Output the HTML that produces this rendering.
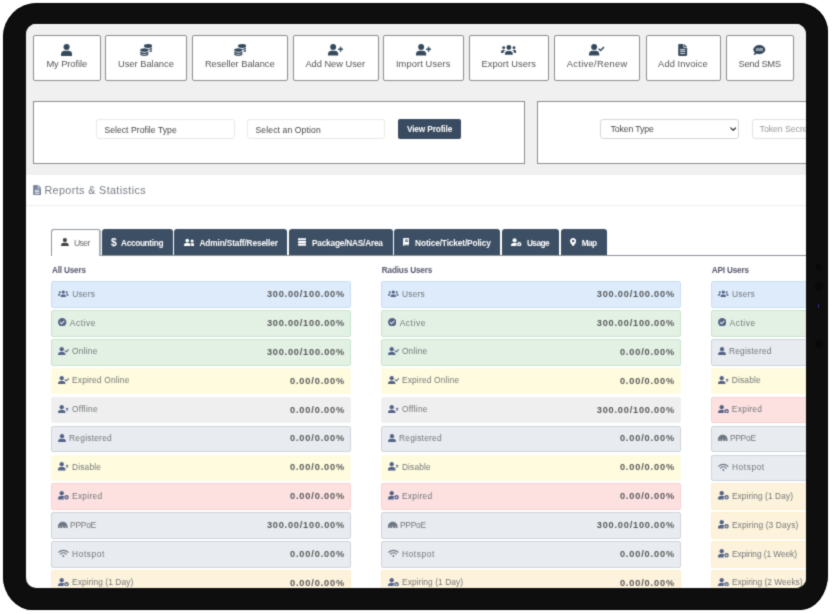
<!DOCTYPE html>
<html lang="en"><head><meta charset="utf-8"><title>Dashboard</title>
<style>
html,body{margin:0;padding:0;background:#fff}
body{width:833px;height:614px;position:relative;overflow:hidden;font-family:"Liberation Sans",sans-serif}
#wrap{position:absolute;left:0;top:0;width:833px;height:614px;background:#fff;filter:url(#soft)}
#frame{position:absolute;left:3px;top:3px;width:825px;height:606.6px;background:#0e0e0e;border-radius:34px 29px 28px 30px / 34px 29px 36px 34px;box-shadow:inset 0 0 0 1px #000}
#screen{position:absolute;left:26px;top:24px;width:780px;height:564px;border-radius:10px;overflow:hidden;background:#fff}
#page{position:absolute;left:-26px;top:-24px;width:833px;height:614px}
#page>div,#page>span,#page>i{position:absolute;box-sizing:border-box}
#page>span{line-height:14px;white-space:nowrap}
#grey{left:0;top:0;width:833px;height:174.6px;background:#f0f0f0}
</style></head>
<body>
<svg width="0" height="0" style="position:absolute"><filter id="soft" x="0" y="0" width="100%" height="100%" color-interpolation-filters="sRGB"><feConvolveMatrix order="3" kernelMatrix="0.03 0.1 0.03 0.1 0.48 0.1 0.03 0.1 0.03" edgeMode="duplicate"/></filter></svg>
<div id="wrap">
<div id="frame"></div>
<div id="cam1" style="position:absolute;left:815.5px;top:264px;width:6px;height:6px;border-radius:50%;background:#090909"></div>
<div id="cam2" style="position:absolute;left:815px;top:283px;width:8px;height:8px;border-radius:50%;background:#090909"></div>
<div id="cam3" style="position:absolute;left:815px;top:340px;width:8px;height:8px;border-radius:50%;background:#090909"></div>
<div id="led" style="position:absolute;left:817.500px;top:303.500px;width:1.500px;height:4px;background:#2a2f8f"></div>
<div id="screen"><div id="page">
<div id="grey"></div>
<div style="left:0;top:24px;width:833px;height:1px;background:#fafafa"></div>
<div style="left:33.1px;top:35.3px;width:67.8px;height:46.0px;background:#fff;border:1px solid #8d8d8d;border-radius:2px"></div>
<i style="left:61.1px;top:44.0px;width:11.2px;height:11.9px"><svg viewBox="0 0 15 16" width="11.2" height="11.9" fill="#34495e" style="display:block"><circle cx="7.500" cy="4.100" r="4.100"/><path d="M0 16v-2.200C0 11.100 2.100 9.200 4.700 9.200h5.600c2.600 0 4.700 1.900 4.700 4.600V16z"/></svg></i>
<span style="letter-spacing:-0.059px;left:46.4px;top:56.6px;font-size:9.3px;color:#555;font-weight:400;">My Profile</span>
<div style="left:105.4px;top:35.3px;width:81.7px;height:46.0px;background:#fff;border:1px solid #8d8d8d;border-radius:2px"></div>
<i style="left:139.7px;top:44.0px;width:12.4px;height:12.0px"><svg viewBox="0 0 16 16" width="12.4" height="12.0" fill="#34495e" style="display:block"><ellipse cx="10.500" cy="2.600" rx="5.500" ry="2.600"/><path d="M16 4.300v1.700c0 .9-1.600 1.700-3.900 2-.3-.6-1-1.100-1.900-1.500 2.700-.1 5-.9 5.800-2.200z"/><path d="M16 7.500v1.700c0 .8-1.300 1.500-3.300 1.900V8.900c1.500-.3 2.700-.8 3.300-1.400z"/><ellipse cx="5.500" cy="8" rx="5.500" ry="2.400"/><path d="M0 9.700c1 1.200 3.100 1.800 5.500 1.800s4.500-.6 5.500-1.800v1.500c0 1.200-2.500 2.200-5.500 2.200S0 12.400 0 11.200z"/><path d="M0 12.400c1 1.200 3.100 1.800 5.500 1.800s4.500-.6 5.500-1.800v1.400c0 1.200-2.500 2.200-5.500 2.200S0 15 0 13.800z"/></svg></i>
<span style="letter-spacing:-0.001px;left:118.0px;top:56.6px;font-size:9.3px;color:#555;font-weight:400;">User Balance</span>
<div style="left:191.9px;top:35.3px;width:96.4px;height:46.0px;background:#fff;border:1px solid #8d8d8d;border-radius:2px"></div>
<i style="left:233.6px;top:44.0px;width:12.4px;height:12.0px"><svg viewBox="0 0 16 16" width="12.4" height="12.0" fill="#34495e" style="display:block"><ellipse cx="10.500" cy="2.600" rx="5.500" ry="2.600"/><path d="M16 4.300v1.700c0 .9-1.600 1.700-3.900 2-.3-.6-1-1.100-1.900-1.500 2.700-.1 5-.9 5.800-2.200z"/><path d="M16 7.500v1.700c0 .8-1.300 1.500-3.300 1.900V8.900c1.500-.3 2.700-.8 3.300-1.400z"/><ellipse cx="5.500" cy="8" rx="5.500" ry="2.400"/><path d="M0 9.700c1 1.200 3.100 1.800 5.500 1.800s4.500-.6 5.500-1.800v1.500c0 1.200-2.500 2.200-5.500 2.200S0 12.400 0 11.200z"/><path d="M0 12.400c1 1.200 3.100 1.800 5.500 1.800s4.500-.6 5.500-1.800v1.400c0 1.200-2.500 2.200-5.500 2.200S0 15 0 13.800z"/></svg></i>
<span style="letter-spacing:-0.039px;left:204.9px;top:56.6px;font-size:9.3px;color:#555;font-weight:400;">Reseller Balance</span>
<div style="left:292.8px;top:35.3px;width:85.9px;height:46.0px;background:#fff;border:1px solid #8d8d8d;border-radius:2px"></div>
<i style="left:327.8px;top:44.2px;width:15.2px;height:11.6px"><svg viewBox="0 0 21 16" width="15.2" height="11.6" fill="#34495e" style="display:block"><circle cx="7.100" cy="4.100" r="4.100"/><path d="M0 16v-2.200C0 11.100 2 9.300 4.500 9.300h5.200c2.500 0 4.500 1.800 4.500 4.500V16z"/><path d="M16.400 3.800h2v2.400h2.400v2h-2.400v2.400h-2V8.200H14v-2h2.400z"/></svg></i>
<span style="letter-spacing:-0.022px;left:305.4px;top:56.6px;font-size:9.3px;color:#555;font-weight:400;">Add New User</span>
<div style="left:383.2px;top:35.3px;width:80.8px;height:46.0px;background:#fff;border:1px solid #8d8d8d;border-radius:2px"></div>
<i style="left:415.6px;top:44.2px;width:15.2px;height:11.6px"><svg viewBox="0 0 21 16" width="15.2" height="11.6" fill="#34495e" style="display:block"><circle cx="7.100" cy="4.100" r="4.100"/><path d="M0 16v-2.200C0 11.100 2 9.300 4.500 9.300h5.200c2.500 0 4.500 1.800 4.500 4.500V16z"/><path d="M16.400 3.800h2v2.400h2.400v2h-2.400v2.400h-2V8.200H14v-2h2.400z"/></svg></i>
<span style="letter-spacing:0.107px;left:395.9px;top:56.6px;font-size:9.3px;color:#555;font-weight:400;">Import Users</span>
<div style="left:468.8px;top:35.3px;width:80.4px;height:46.0px;background:#fff;border:1px solid #8d8d8d;border-radius:2px"></div>
<i style="left:500.8px;top:45.1px;width:15.7px;height:9.7px"><svg viewBox="0 0 20 12.4" width="15.7" height="9.7" fill="#34495e" style="display:block"><circle cx="10" cy="3.200" r="3.100"/><path d="M5 12.400V11c0-2 1.500-3.400 3.400-3.400h3.200c1.900 0 3.400 1.400 3.400 3.400v1.400z"/><circle cx="3.400" cy="3.500" r="1.900"/><circle cx="16.600" cy="3.500" r="1.900"/><path d="M0 10.200V9c0-1.400 1-2.500 2.400-2.500h1.400c.5 0 1 .2 1.400.4C3.900 7.600 3.100 8.800 3 10.200z"/><path d="M20 10.200V9c0-1.400-1-2.500-2.400-2.500h-1.400c-.5 0-1 .2-1.400.4 1.300.7 2.100 1.900 2.200 3.300z"/></svg></i>
<span style="letter-spacing:0.070px;left:481.4px;top:56.6px;font-size:9.3px;color:#555;font-weight:400;">Export Users</span>
<div style="left:554.4px;top:35.3px;width:86.0px;height:46.0px;background:#fff;border:1px solid #8d8d8d;border-radius:2px"></div>
<i style="left:589.4px;top:44.2px;width:15.2px;height:11.6px"><svg viewBox="0 0 21 16" width="15.2" height="11.6" fill="#34495e" style="display:block"><circle cx="7.100" cy="4.100" r="4.100"/><path d="M0 16v-2.200C0 11.100 2 9.300 4.500 9.300h5.200c2.500 0 4.500 1.800 4.500 4.500V16z"/><path fill="none" stroke="#34495e" stroke-width="2" d="M13.300 6.500l2.700 2.400 4.700-4.600"/></svg></i>
<span style="letter-spacing:0.341px;left:566.7px;top:56.6px;font-size:9.3px;color:#555;font-weight:400;">Active/Renew</span>
<div style="left:645.5px;top:35.3px;width:75.6px;height:46.0px;background:#fff;border:1px solid #8d8d8d;border-radius:2px"></div>
<i style="left:678.2px;top:44.0px;width:9.4px;height:11.9px"><svg viewBox="0 0 12 16" width="9.4" height="11.9" fill="#34495e" style="display:block"><path fill-rule="evenodd" d="M1.400 0H7v4.200c0 .5.400.8.800.8H12v9.600c0 .8-.6 1.400-1.400 1.400H1.400C.6 16 0 15.400 0 14.600V1.400C0 .6.600 0 1.400 0zM2.600 7.200v1.200h6.800V7.200zm0 2.400v1.200h6.800V9.600zm0 2.400v1.200h6.800V12zM8 0l4 4H8z"/></svg></i>
<span style="letter-spacing:0.101px;left:658.1px;top:56.6px;font-size:9.3px;color:#555;font-weight:400;">Add Invoice</span>
<div style="left:725.5px;top:35.3px;width:68.8px;height:46.0px;background:#fff;border:1px solid #8d8d8d;border-radius:2px"></div>
<i style="left:753.4px;top:45.0px;width:12.3px;height:10.0px"><svg viewBox="0 0 16 13" width="12.3" height="10.0" fill="#34495e" style="display:block"><ellipse cx="8.200" cy="6" rx="7.800" ry="5.900"/><path d="M2.200 9.300C2 10.800 1 12.100.2 12.700c2 .2 4-.6 5.200-1.700z"/><text x="8.200" y="7.500" text-anchor="middle" font-family="Liberation Sans, sans-serif" font-weight="700" font-size="4.400" fill="#dfe4ea">SMS</text></svg></i>
<span style="letter-spacing:-0.279px;left:738.5px;top:56.6px;font-size:9.3px;color:#555;font-weight:400;">Send SMS</span>
<div style="left:33.1px;top:101.1px;width:492.0px;height:63.2px;background:#fff;border:1px solid #8d8d8d"></div>
<div style="left:537.2px;top:101.1px;width:300.0px;height:63.2px;background:#fff;border:1px solid #8d8d8d"></div>
<div style="left:96.3px;top:119.3px;width:138.4px;height:20.2px;background:#fff;border:1px solid #e9e9e9;border-radius:3px"></div>
<span style="letter-spacing:0.044px;left:104.4px;top:122.8px;font-size:8.6px;color:#454545;font-weight:400;">Select Profile Type</span>
<div style="left:247.4px;top:119.3px;width:138.1px;height:20.2px;background:#fff;border:1px solid #e9e9e9;border-radius:3px"></div>
<span style="letter-spacing:0.110px;left:255.5px;top:122.8px;font-size:8.6px;color:#454545;font-weight:400;">Select an Option</span>
<div style="left:398.2px;top:119.3px;width:62.6px;height:20.2px;background:#394b61;border-radius:2px"></div>
<span style="letter-spacing:-0.136px;left:406.9px;top:122.0px;font-size:8.3px;color:#fff;font-weight:700;">View Profile</span>
<div style="left:599.8px;top:119.3px;width:139.0px;height:20.2px;background:#fff;border:1px solid #d6d6d6;border-radius:3px"></div>
<span style="letter-spacing:-0.160px;left:610.5px;top:122.0px;font-size:8.8px;color:#4a4a4a;font-weight:400;">Token Type</span>
<i style="left:729.6px;top:127.3px;width:6.4px;height:4.2px"><svg viewBox="0 0 10 6" width="6.4" height="4.2" fill="#2a2a2a" style="display:block"><path fill="none" stroke="#2a2a2a" stroke-width="1.800" stroke-linecap="round" stroke-linejoin="round" d="M1.200 1.200L5 4.800l3.800-3.600"/></svg></i>
<div style="left:751.5px;top:119.3px;width:120.0px;height:20.2px;background:#fff;border:1px solid #e2e2e2;border-radius:3px"></div>
<span style="letter-spacing:-0.086px;left:759.6px;top:122.0px;font-size:8.8px;color:#9a9a9a;font-weight:400;">Token Secret</span>
<i style="left:33.2px;top:184.5px;width:8.2px;height:10.6px"><svg viewBox="0 0 12 16" width="8.2" height="10.6" fill="#78849c" style="display:block"><path fill-rule="evenodd" d="M1.400 0H7v4.200c0 .5.400.8.800.8H12v9.600c0 .8-.6 1.400-1.400 1.400H1.400C.6 16 0 15.400 0 14.600V1.400C0 .6.600 0 1.400 0zM2.600 7.200v1.200h6.800V7.200zm0 2.400v1.200h6.800V9.600zm0 2.400v1.200h6.800V12zM8 0l4 4H8z"/></svg></i>
<span style="letter-spacing:0.367px;left:44.4px;top:183.0px;font-size:10.8px;color:#777c84;font-weight:400;">Reports &amp; Statistics</span>
<div style="left:25.0px;top:205.0px;width:800.0px;height:1.0px;background:#ececec"></div>
<div style="left:51.0px;top:254.8px;width:800.0px;height:1.0px;background:#8a8f96"></div>
<div style="left:51.0px;top:229.3px;width:50.4px;height:27.0px;background:#fff;border:1px solid #90969c;border-right:2px solid #a7b0ba;border-bottom:0;border-radius:3px 3px 0 0"></div>
<i style="left:60.9px;top:237.9px;width:7.8px;height:8.2px"><svg viewBox="0 0 15 16" width="7.8" height="8.2" fill="#444" style="display:block"><circle cx="7.500" cy="4.100" r="4.100"/><path d="M0 16v-2.200C0 11.100 2.100 9.200 4.700 9.200h5.600c2.600 0 4.700 1.900 4.700 4.600V16z"/></svg></i>
<span style="letter-spacing:-0.600px;left:73.9px;top:236.3px;font-size:8.7px;color:#6b6b6b;font-weight:400;">User</span>
<div style="left:102.1px;top:229.3px;width:70.7px;height:26.0px;background:#3d4f64;border-radius:3px 3px 0 0"></div>
<span style="letter-spacing:-0.534px;left:110.9px;top:236.0px;font-size:10.3px;color:#fff;font-weight:700;">$</span>
<span style="letter-spacing:-0.349px;left:121.0px;top:236.0px;font-size:8.3px;color:#fff;font-weight:700;">Accounting</span>
<div style="left:174.1px;top:229.3px;width:112.8px;height:26.0px;background:#3d4f64;border-radius:3px 3px 0 0"></div>
<i style="left:183.6px;top:237.7px;width:10.8px;height:8.6px"><svg viewBox="0 0 20 16" width="10.8" height="8.6" fill="#fff" style="display:block"><circle cx="6" cy="5" r="3.400"/><path d="M0 15v-1.600c0-2.400 1.700-3.900 3.800-3.900h4.400c2.100 0 3.800 1.500 3.800 3.900V15z"/><circle cx="15" cy="5.500" r="2.900"/><path d="M13.300 15v-1.800c0-1.300-.5-2.400-1.300-3.200.4-.2.900-.3 1.400-.3h3.200c1.900 0 3.400 1.300 3.400 3.500V15z"/></svg></i>
<span style="letter-spacing:-0.145px;left:199.5px;top:236.0px;font-size:8.3px;color:#fff;font-weight:700;">Admin/Staff/Reseller</span>
<div style="left:288.9px;top:229.3px;width:103.7px;height:26.0px;background:#3d4f64;border-radius:3px 3px 0 0"></div>
<i style="left:297.9px;top:238.1px;width:8.6px;height:7.8px"><svg viewBox="0 0 16 14" width="8.6" height="7.8" fill="#fff" style="display:block"><rect x="0" y="0" width="16" height="3.800" rx=".8"/><rect x="0" y="5.100" width="16" height="3.800" rx=".8"/><rect x="0" y="10.200" width="16" height="3.800" rx=".8"/></svg></i>
<span style="letter-spacing:-0.218px;left:312.0px;top:236.0px;font-size:8.3px;color:#fff;font-weight:700;">Package/NAS/Area</span>
<div style="left:394.2px;top:229.3px;width:106.0px;height:26.0px;background:#3d4f64;border-radius:3px 3px 0 0"></div>
<i style="left:402.9px;top:237.7px;width:6.6px;height:8.6px"><svg viewBox="0 0 12 16" width="6.6" height="8.6" fill="#fff" style="display:block"><path fill-rule="evenodd" d="M2.200 0H12v12.500H2.600c-.7 0-1.100.4-1.100.9s.4.900 1.100.9H12V16H2.200C1 16 0 15 0 13.800V2.200C0 1 1 0 2.200 0zM3.500 3v1.500h6V3zm0 3v1.500h6V6z"/></svg></i>
<span style="letter-spacing:-0.129px;left:415.1px;top:236.0px;font-size:8.3px;color:#fff;font-weight:700;">Notice/Ticket/Policy</span>
<div style="left:501.9px;top:229.3px;width:57.0px;height:26.0px;background:#3d4f64;border-radius:3px 3px 0 0"></div>
<i style="left:511.1px;top:237.7px;width:10.6px;height:8.6px"><svg viewBox="0 0 21 16" width="10.6" height="8.6" fill="#fff" style="display:block"><circle cx="7.100" cy="4.100" r="4.100"/><path d="M0 16v-2.200C0 11.100 2 9.300 4.500 9.300h5.200c.8 0 1.600.2 2.200.6-1.500 1.500-1.900 4-.4 6.100z"/><path fill-rule="evenodd" d="M16.300 7.600a4.300 4.300 0 1 0 0 8.600 4.300 4.300 0 0 0 0-8.600zm0 2.700a1.600 1.600 0 1 1 0 3.200 1.600 1.600 0 0 1 0-3.200z"/></svg></i>
<span style="letter-spacing:-0.552px;left:526.9px;top:236.0px;font-size:8.3px;color:#fff;font-weight:700;">Usage</span>
<div style="left:561.2px;top:229.3px;width:45.4px;height:26.0px;background:#3d4f64;border-radius:3px 3px 0 0"></div>
<i style="left:570.1px;top:237.8px;width:6.2px;height:8.4px"><svg viewBox="0 0 12 16" width="6.2" height="8.4" fill="#fff" style="display:block"><path fill-rule="evenodd" d="M6 0C2.700 0 0 2.600 0 5.900 0 8.300 .9 9 5.400 15.700c.3.400.900.400 1.200 0C11.100 9 12 8.300 12 5.900 12 2.600 9.300 0 6 0zm0 3.500a2.400 2.400 0 1 1 0 4.800 2.400 2.400 0 0 1 0-4.800z"/></svg></i>
<span style="letter-spacing:-0.600px;left:581.7px;top:236.0px;font-size:8.3px;color:#fff;font-weight:700;">Map</span>
<span style="letter-spacing:-0.175px;left:51.9px;top:264.0px;font-size:8.2px;color:#55566c;font-weight:700;">All Users</span>
<div style="left:51.1px;top:281.2px;width:299.8px;height:26.6px;background:#ddebfb;border:1px solid #c9def6;border-radius:2px"></div>
<i style="left:58.2px;top:289.7px;width:10.5px;height:7.4px"><svg viewBox="0 0 20 12.4" width="10.5" height="7.4" fill="#546387" style="display:block"><circle cx="10" cy="3.200" r="3.100"/><path d="M5 12.400V11c0-2 1.500-3.400 3.400-3.400h3.200c1.900 0 3.400 1.400 3.400 3.400v1.400z"/><circle cx="3.400" cy="3.500" r="1.900"/><circle cx="16.600" cy="3.500" r="1.900"/><path d="M0 10.200V9c0-1.400 1-2.500 2.400-2.500h1.400c.5 0 1 .2 1.400.4C3.900 7.600 3.100 8.800 3 10.200z"/><path d="M20 10.200V9c0-1.400-1-2.500-2.400-2.500h-1.400c-.5 0-1 .2-1.400.4 1.300.7 2.100 1.900 2.200 3.300z"/></svg></i>
<span style="letter-spacing:0.206px;left:72.2px;top:286.6px;font-size:8.4px;color:#737779;font-weight:400;">Users</span>
<span style="letter-spacing:0.797px;left:266.9px;top:287.0px;font-size:9.2px;color:#585858;font-weight:700;">300.00/100.00%</span>
<div style="left:51.1px;top:310.1px;width:299.8px;height:26.6px;background:#e2f1e4;border:1px solid #c8e5ce;border-radius:2px"></div>
<i style="left:58.2px;top:318.1px;width:8.4px;height:8.4px"><svg viewBox="0 0 16 16" width="8.4" height="8.4" fill="#546387" style="display:block"><path fill-rule="evenodd" d="M8 0a8 8 0 1 0 0 16A8 8 0 0 0 8 0zM6.800 12.200L3.200 8.600l1.400-1.400 2.200 2.200 4.600-4.800 1.400 1.400z"/></svg></i>
<span style="letter-spacing:0.558px;left:69.8px;top:315.5px;font-size:8.4px;color:#737779;font-weight:400;">Active</span>
<span style="letter-spacing:0.797px;left:266.9px;top:315.9px;font-size:9.2px;color:#585858;font-weight:700;">300.00/100.00%</span>
<div style="left:51.1px;top:339.0px;width:299.8px;height:26.6px;background:#e2f1e4;border:1px solid #c8e5ce;border-radius:2px"></div>
<i style="left:58.2px;top:346.9px;width:11px;height:8.6px"><svg viewBox="0 0 21 16" width="11" height="8.6" fill="#546387" style="display:block"><circle cx="7.100" cy="4.100" r="4.100"/><path d="M0 16v-2.200C0 11.100 2 9.300 4.500 9.300h5.200c2.500 0 4.500 1.800 4.500 4.500V16z"/><path fill="none" stroke="#546387" stroke-width="2" d="M13.300 6.500l2.700 2.400 4.700-4.600"/></svg></i>
<span style="letter-spacing:0.216px;left:72.0px;top:344.4px;font-size:8.4px;color:#737779;font-weight:400;">Online</span>
<span style="letter-spacing:0.797px;left:266.9px;top:344.8px;font-size:9.2px;color:#585858;font-weight:700;">300.00/100.00%</span>
<div style="left:51.1px;top:367.8px;width:299.8px;height:26.6px;background:#fefbde;border:1px solid #fefce6;border-radius:2px"></div>
<i style="left:58.2px;top:375.7px;width:11px;height:8.6px"><svg viewBox="0 0 21 16" width="11" height="8.6" fill="#546387" style="display:block"><circle cx="7.100" cy="4.100" r="4.100"/><path d="M0 16v-2.200C0 11.100 2 9.300 4.500 9.300h5.200c2.500 0 4.500 1.800 4.500 4.500V16z"/><path fill="none" stroke="#546387" stroke-width="2" d="M13.300 6.500l2.700 2.400 4.700-4.600"/></svg></i>
<span style="letter-spacing:0.182px;left:72.0px;top:373.2px;font-size:8.4px;color:#737779;font-weight:400;">Expired Online</span>
<span style="letter-spacing:0.856px;left:290.0px;top:373.6px;font-size:9.2px;color:#585858;font-weight:700;">0.00/0.00%</span>
<div style="left:51.1px;top:396.7px;width:299.8px;height:26.6px;background:#efefef;border:1px solid #f1f1f1;border-radius:2px"></div>
<i style="left:58.2px;top:404.6px;width:11px;height:8.6px"><svg viewBox="0 0 21 16" width="11" height="8.6" fill="#546387" style="display:block"><circle cx="7.100" cy="4.100" r="4.100"/><path d="M0 16v-2.200C0 11.100 2 9.300 4.500 9.300h5.200c2.500 0 4.500 1.800 4.500 4.500V16z"/><path fill="none" stroke="#546387" stroke-width="2.200" d="M15.400 5.900l4 4m0-4l-4 4"/></svg></i>
<span style="letter-spacing:0.256px;left:72.0px;top:402.1px;font-size:8.4px;color:#737779;font-weight:400;">Offline</span>
<span style="letter-spacing:0.856px;left:290.0px;top:402.5px;font-size:9.2px;color:#585858;font-weight:700;">0.00/0.00%</span>
<div style="left:51.1px;top:425.6px;width:299.8px;height:26.6px;background:#e8ecf0;border:1px solid #cfd5dc;border-radius:2px"></div>
<i style="left:58.2px;top:433.6px;width:8px;height:8.4px"><svg viewBox="0 0 15 16" width="8" height="8.4" fill="#546387" style="display:block"><circle cx="7.500" cy="4.100" r="4.100"/><path d="M0 16v-2.200C0 11.100 2.100 9.200 4.700 9.200h5.600c2.600 0 4.700 1.900 4.700 4.600V16z"/></svg></i>
<span style="letter-spacing:0.232px;left:69.1px;top:431.0px;font-size:8.4px;color:#737779;font-weight:400;">Registered</span>
<span style="letter-spacing:0.856px;left:290.0px;top:431.4px;font-size:9.2px;color:#585858;font-weight:700;">0.00/0.00%</span>
<div style="left:51.1px;top:454.5px;width:299.8px;height:26.6px;background:#fefbde;border:1px solid #fefce6;border-radius:2px"></div>
<i style="left:58.2px;top:462.4px;width:11px;height:8.6px"><svg viewBox="0 0 21 16" width="11" height="8.6" fill="#546387" style="display:block"><circle cx="7.100" cy="4.100" r="4.100"/><path d="M0 16v-2.200C0 11.100 2 9.300 4.500 9.300h5.200c2.500 0 4.500 1.800 4.500 4.500V16z"/><path fill="none" stroke="#546387" stroke-width="2.200" d="M15.400 5.900l4 4m0-4l-4 4"/></svg></i>
<span style="letter-spacing:0.160px;left:72.0px;top:459.9px;font-size:8.4px;color:#737779;font-weight:400;">Disable</span>
<span style="letter-spacing:0.856px;left:290.0px;top:460.3px;font-size:9.2px;color:#585858;font-weight:700;">0.00/0.00%</span>
<div style="left:51.1px;top:483.4px;width:299.8px;height:26.6px;background:#fde1e1;border:1px solid #f8cfd0;border-radius:2px"></div>
<i style="left:58.2px;top:491.3px;width:11px;height:8.6px"><svg viewBox="0 0 21 16" width="11" height="8.6" fill="#546387" style="display:block"><circle cx="7.100" cy="4.100" r="4.100"/><path d="M0 16v-2.200C0 11.100 2 9.300 4.500 9.300h5.200c.8 0 1.600.2 2.200.6-1.500 1.500-1.900 4-.4 6.100z"/><path fill-rule="evenodd" d="M16.300 7.600a4.300 4.300 0 1 0 0 8.600 4.300 4.300 0 0 0 0-8.600zm0 2.700a1.600 1.600 0 1 1 0 3.200 1.600 1.600 0 0 1 0-3.200z"/></svg></i>
<span style="letter-spacing:0.299px;left:72.0px;top:488.8px;font-size:8.4px;color:#737779;font-weight:400;">Expired</span>
<span style="letter-spacing:0.856px;left:290.0px;top:489.2px;font-size:9.2px;color:#585858;font-weight:700;">0.00/0.00%</span>
<div style="left:51.1px;top:512.2px;width:299.8px;height:26.6px;background:#e8ecf0;border:1px solid #cfd5dc;border-radius:2px"></div>
<i style="left:58.2px;top:520.6px;width:9.5px;height:7.6px"><svg viewBox="0 0 20 16" width="9.5" height="7.6" fill="#6f7785" style="display:block"><path d="M0 15v-4C0 5.500 4.500 1.500 10 1.500S20 5.500 20 11v4h-3.600v-4h-1.200v4H11v-4H9v4H4.800v-4H3.600v4z"/></svg></i>
<span style="letter-spacing:-0.229px;left:70.1px;top:517.6px;font-size:8.4px;color:#737779;font-weight:400;">PPPoE</span>
<span style="letter-spacing:0.797px;left:266.9px;top:518.0px;font-size:9.2px;color:#585858;font-weight:700;">300.00/100.00%</span>
<div style="left:51.1px;top:541.1px;width:299.8px;height:26.6px;background:#e8ecf0;border:1px solid #cfd5dc;border-radius:2px"></div>
<i style="left:58.2px;top:549.1px;width:10.8px;height:8.4px"><svg viewBox="0 0 20 16" width="10.8" height="8.4" fill="#6f7785" style="display:block"><path fill="none" stroke="#6f7785" stroke-width="2.2" stroke-linecap="round" d="M1.200 6.200C6 1.600 14 1.600 18.800 6.200"/><path fill="none" stroke="#6f7785" stroke-width="2.2" stroke-linecap="round" d="M4.600 9.700c3-2.900 7.800-2.900 10.800 0"/><circle cx="10" cy="13.200" r="1.900"/></svg></i>
<span style="letter-spacing:0.571px;left:72.1px;top:546.5px;font-size:8.4px;color:#737779;font-weight:400;">Hotspot</span>
<span style="letter-spacing:0.856px;left:290.0px;top:546.9px;font-size:9.2px;color:#585858;font-weight:700;">0.00/0.00%</span>
<div style="left:51.1px;top:570.0px;width:299.8px;height:26.6px;background:#fdf3dc;border:1px solid #fcefcb;border-radius:2px"></div>
<i style="left:58.2px;top:577.9px;width:11px;height:8.6px"><svg viewBox="0 0 21 16" width="11" height="8.6" fill="#546387" style="display:block"><circle cx="7.100" cy="4.100" r="4.100"/><path d="M0 16v-2.200C0 11.100 2 9.300 4.500 9.300h5.200c.8 0 1.600.2 2.200.6-1.500 1.500-1.900 4-.4 6.100z"/><path fill-rule="evenodd" d="M16.300 7.600a4.300 4.300 0 1 0 0 8.600 4.300 4.300 0 0 0 0-8.600zm0 2.700a1.600 1.600 0 1 1 0 3.200 1.600 1.600 0 0 1 0-3.200z"/></svg></i>
<span style="letter-spacing:0.070px;left:72.1px;top:575.4px;font-size:8.4px;color:#737779;font-weight:400;">Expiring (1 Day)</span>
<span style="letter-spacing:0.856px;left:290.0px;top:575.8px;font-size:9.2px;color:#585858;font-weight:700;">0.00/0.00%</span>
<span style="letter-spacing:-0.168px;left:381.8px;top:264.0px;font-size:8.2px;color:#55566c;font-weight:700;">Radius Users</span>
<div style="left:381.0px;top:281.2px;width:299.8px;height:26.6px;background:#ddebfb;border:1px solid #c9def6;border-radius:2px"></div>
<i style="left:388.1px;top:289.7px;width:10.5px;height:7.4px"><svg viewBox="0 0 20 12.4" width="10.5" height="7.4" fill="#546387" style="display:block"><circle cx="10" cy="3.200" r="3.100"/><path d="M5 12.400V11c0-2 1.500-3.400 3.400-3.400h3.200c1.900 0 3.400 1.400 3.400 3.400v1.400z"/><circle cx="3.400" cy="3.500" r="1.900"/><circle cx="16.600" cy="3.500" r="1.900"/><path d="M0 10.200V9c0-1.400 1-2.500 2.400-2.500h1.400c.5 0 1 .2 1.400.4C3.900 7.600 3.100 8.800 3 10.200z"/><path d="M20 10.200V9c0-1.400-1-2.500-2.400-2.500h-1.400c-.5 0-1 .2-1.400.4 1.300.7 2.100 1.900 2.200 3.300z"/></svg></i>
<span style="letter-spacing:0.206px;left:402.1px;top:286.6px;font-size:8.4px;color:#737779;font-weight:400;">Users</span>
<span style="letter-spacing:0.797px;left:596.8px;top:287.0px;font-size:9.2px;color:#585858;font-weight:700;">300.00/100.00%</span>
<div style="left:381.0px;top:310.1px;width:299.8px;height:26.6px;background:#e2f1e4;border:1px solid #c8e5ce;border-radius:2px"></div>
<i style="left:388.1px;top:318.1px;width:8.4px;height:8.4px"><svg viewBox="0 0 16 16" width="8.4" height="8.4" fill="#546387" style="display:block"><path fill-rule="evenodd" d="M8 0a8 8 0 1 0 0 16A8 8 0 0 0 8 0zM6.800 12.200L3.200 8.600l1.400-1.400 2.200 2.200 4.600-4.800 1.400 1.400z"/></svg></i>
<span style="letter-spacing:0.558px;left:399.7px;top:315.5px;font-size:8.4px;color:#737779;font-weight:400;">Active</span>
<span style="letter-spacing:0.797px;left:596.8px;top:315.9px;font-size:9.2px;color:#585858;font-weight:700;">300.00/100.00%</span>
<div style="left:381.0px;top:339.0px;width:299.8px;height:26.6px;background:#e2f1e4;border:1px solid #c8e5ce;border-radius:2px"></div>
<i style="left:388.1px;top:346.9px;width:11px;height:8.6px"><svg viewBox="0 0 21 16" width="11" height="8.6" fill="#546387" style="display:block"><circle cx="7.100" cy="4.100" r="4.100"/><path d="M0 16v-2.200C0 11.100 2 9.300 4.500 9.300h5.200c2.500 0 4.500 1.800 4.500 4.500V16z"/><path fill="none" stroke="#546387" stroke-width="2" d="M13.300 6.500l2.700 2.400 4.700-4.600"/></svg></i>
<span style="letter-spacing:0.216px;left:401.9px;top:344.4px;font-size:8.4px;color:#737779;font-weight:400;">Online</span>
<span style="letter-spacing:0.856px;left:619.9px;top:344.8px;font-size:9.2px;color:#585858;font-weight:700;">0.00/0.00%</span>
<div style="left:381.0px;top:367.8px;width:299.8px;height:26.6px;background:#fefbde;border:1px solid #fefce6;border-radius:2px"></div>
<i style="left:388.1px;top:375.7px;width:11px;height:8.6px"><svg viewBox="0 0 21 16" width="11" height="8.6" fill="#546387" style="display:block"><circle cx="7.100" cy="4.100" r="4.100"/><path d="M0 16v-2.200C0 11.100 2 9.300 4.500 9.300h5.200c2.500 0 4.500 1.800 4.500 4.500V16z"/><path fill="none" stroke="#546387" stroke-width="2" d="M13.300 6.500l2.700 2.400 4.700-4.600"/></svg></i>
<span style="letter-spacing:0.182px;left:401.9px;top:373.2px;font-size:8.4px;color:#737779;font-weight:400;">Expired Online</span>
<span style="letter-spacing:0.856px;left:619.9px;top:373.6px;font-size:9.2px;color:#585858;font-weight:700;">0.00/0.00%</span>
<div style="left:381.0px;top:396.7px;width:299.8px;height:26.6px;background:#efefef;border:1px solid #f1f1f1;border-radius:2px"></div>
<i style="left:388.1px;top:404.6px;width:11px;height:8.6px"><svg viewBox="0 0 21 16" width="11" height="8.6" fill="#546387" style="display:block"><circle cx="7.100" cy="4.100" r="4.100"/><path d="M0 16v-2.200C0 11.100 2 9.300 4.500 9.300h5.200c2.500 0 4.500 1.800 4.500 4.500V16z"/><path fill="none" stroke="#546387" stroke-width="2.200" d="M15.400 5.900l4 4m0-4l-4 4"/></svg></i>
<span style="letter-spacing:0.256px;left:401.9px;top:402.1px;font-size:8.4px;color:#737779;font-weight:400;">Offline</span>
<span style="letter-spacing:0.797px;left:596.8px;top:402.5px;font-size:9.2px;color:#585858;font-weight:700;">300.00/100.00%</span>
<div style="left:381.0px;top:425.6px;width:299.8px;height:26.6px;background:#e8ecf0;border:1px solid #cfd5dc;border-radius:2px"></div>
<i style="left:388.1px;top:433.6px;width:8px;height:8.4px"><svg viewBox="0 0 15 16" width="8" height="8.4" fill="#546387" style="display:block"><circle cx="7.500" cy="4.100" r="4.100"/><path d="M0 16v-2.200C0 11.100 2.100 9.200 4.700 9.200h5.600c2.600 0 4.700 1.900 4.700 4.600V16z"/></svg></i>
<span style="letter-spacing:0.232px;left:399.0px;top:431.0px;font-size:8.4px;color:#737779;font-weight:400;">Registered</span>
<span style="letter-spacing:0.856px;left:619.9px;top:431.4px;font-size:9.2px;color:#585858;font-weight:700;">0.00/0.00%</span>
<div style="left:381.0px;top:454.5px;width:299.8px;height:26.6px;background:#fefbde;border:1px solid #fefce6;border-radius:2px"></div>
<i style="left:388.1px;top:462.4px;width:11px;height:8.6px"><svg viewBox="0 0 21 16" width="11" height="8.6" fill="#546387" style="display:block"><circle cx="7.100" cy="4.100" r="4.100"/><path d="M0 16v-2.200C0 11.100 2 9.300 4.500 9.300h5.200c2.500 0 4.500 1.800 4.500 4.500V16z"/><path fill="none" stroke="#546387" stroke-width="2.200" d="M15.400 5.900l4 4m0-4l-4 4"/></svg></i>
<span style="letter-spacing:0.160px;left:401.9px;top:459.9px;font-size:8.4px;color:#737779;font-weight:400;">Disable</span>
<span style="letter-spacing:0.856px;left:619.9px;top:460.3px;font-size:9.2px;color:#585858;font-weight:700;">0.00/0.00%</span>
<div style="left:381.0px;top:483.4px;width:299.8px;height:26.6px;background:#fde1e1;border:1px solid #f8cfd0;border-radius:2px"></div>
<i style="left:388.1px;top:491.3px;width:11px;height:8.6px"><svg viewBox="0 0 21 16" width="11" height="8.6" fill="#546387" style="display:block"><circle cx="7.100" cy="4.100" r="4.100"/><path d="M0 16v-2.200C0 11.100 2 9.300 4.500 9.300h5.200c.8 0 1.600.2 2.200.6-1.500 1.500-1.900 4-.4 6.100z"/><path fill-rule="evenodd" d="M16.300 7.600a4.300 4.300 0 1 0 0 8.600 4.300 4.300 0 0 0 0-8.600zm0 2.700a1.600 1.600 0 1 1 0 3.200 1.600 1.600 0 0 1 0-3.200z"/></svg></i>
<span style="letter-spacing:0.299px;left:401.9px;top:488.8px;font-size:8.4px;color:#737779;font-weight:400;">Expired</span>
<span style="letter-spacing:0.856px;left:619.9px;top:489.2px;font-size:9.2px;color:#585858;font-weight:700;">0.00/0.00%</span>
<div style="left:381.0px;top:512.2px;width:299.8px;height:26.6px;background:#e8ecf0;border:1px solid #cfd5dc;border-radius:2px"></div>
<i style="left:388.1px;top:520.6px;width:9.5px;height:7.6px"><svg viewBox="0 0 20 16" width="9.5" height="7.6" fill="#6f7785" style="display:block"><path d="M0 15v-4C0 5.500 4.500 1.500 10 1.500S20 5.500 20 11v4h-3.600v-4h-1.200v4H11v-4H9v4H4.800v-4H3.600v4z"/></svg></i>
<span style="letter-spacing:-0.229px;left:400.0px;top:517.6px;font-size:8.4px;color:#737779;font-weight:400;">PPPoE</span>
<span style="letter-spacing:0.797px;left:596.8px;top:518.0px;font-size:9.2px;color:#585858;font-weight:700;">300.00/100.00%</span>
<div style="left:381.0px;top:541.1px;width:299.8px;height:26.6px;background:#e8ecf0;border:1px solid #cfd5dc;border-radius:2px"></div>
<i style="left:388.1px;top:549.1px;width:10.8px;height:8.4px"><svg viewBox="0 0 20 16" width="10.8" height="8.4" fill="#6f7785" style="display:block"><path fill="none" stroke="#6f7785" stroke-width="2.2" stroke-linecap="round" d="M1.200 6.200C6 1.600 14 1.600 18.800 6.200"/><path fill="none" stroke="#6f7785" stroke-width="2.2" stroke-linecap="round" d="M4.600 9.700c3-2.900 7.800-2.900 10.800 0"/><circle cx="10" cy="13.200" r="1.900"/></svg></i>
<span style="letter-spacing:0.571px;left:402.0px;top:546.5px;font-size:8.4px;color:#737779;font-weight:400;">Hotspot</span>
<span style="letter-spacing:0.856px;left:619.9px;top:546.9px;font-size:9.2px;color:#585858;font-weight:700;">0.00/0.00%</span>
<div style="left:381.0px;top:570.0px;width:299.8px;height:26.6px;background:#fdf3dc;border:1px solid #fcefcb;border-radius:2px"></div>
<i style="left:388.1px;top:577.9px;width:11px;height:8.6px"><svg viewBox="0 0 21 16" width="11" height="8.6" fill="#546387" style="display:block"><circle cx="7.100" cy="4.100" r="4.100"/><path d="M0 16v-2.200C0 11.100 2 9.300 4.500 9.300h5.200c.8 0 1.600.2 2.200.6-1.500 1.500-1.900 4-.4 6.100z"/><path fill-rule="evenodd" d="M16.300 7.600a4.300 4.300 0 1 0 0 8.600 4.300 4.300 0 0 0 0-8.600zm0 2.700a1.600 1.600 0 1 1 0 3.200 1.600 1.600 0 0 1 0-3.200z"/></svg></i>
<span style="letter-spacing:0.070px;left:402.0px;top:575.4px;font-size:8.4px;color:#737779;font-weight:400;">Expiring (1 Day)</span>
<span style="letter-spacing:0.856px;left:619.9px;top:575.8px;font-size:9.2px;color:#585858;font-weight:700;">0.00/0.00%</span>
<span style="letter-spacing:-0.161px;left:711.7px;top:264.0px;font-size:8.2px;color:#55566c;font-weight:700;">API Users</span>
<div style="left:710.9px;top:281.2px;width:299.8px;height:26.6px;background:#ddebfb;border:1px solid #c9def6;border-radius:2px"></div>
<i style="left:718.0px;top:289.7px;width:10.5px;height:7.4px"><svg viewBox="0 0 20 12.4" width="10.5" height="7.4" fill="#546387" style="display:block"><circle cx="10" cy="3.200" r="3.100"/><path d="M5 12.400V11c0-2 1.500-3.400 3.400-3.400h3.200c1.900 0 3.400 1.400 3.400 3.400v1.400z"/><circle cx="3.400" cy="3.500" r="1.900"/><circle cx="16.600" cy="3.500" r="1.900"/><path d="M0 10.200V9c0-1.400 1-2.500 2.400-2.500h1.400c.5 0 1 .2 1.400.4C3.900 7.600 3.100 8.800 3 10.200z"/><path d="M20 10.200V9c0-1.400-1-2.500-2.400-2.500h-1.400c-.5 0-1 .2-1.400.4 1.300.7 2.100 1.900 2.200 3.300z"/></svg></i>
<span style="letter-spacing:0.206px;left:732.0px;top:286.6px;font-size:8.4px;color:#737779;font-weight:400;">Users</span>
<span style="letter-spacing:0.797px;left:926.7px;top:287.0px;font-size:9.2px;color:#585858;font-weight:700;">300.00/100.00%</span>
<div style="left:710.9px;top:310.1px;width:299.8px;height:26.6px;background:#e2f1e4;border:1px solid #c8e5ce;border-radius:2px"></div>
<i style="left:718.0px;top:318.1px;width:8.4px;height:8.4px"><svg viewBox="0 0 16 16" width="8.4" height="8.4" fill="#546387" style="display:block"><path fill-rule="evenodd" d="M8 0a8 8 0 1 0 0 16A8 8 0 0 0 8 0zM6.800 12.200L3.200 8.600l1.400-1.400 2.200 2.200 4.600-4.800 1.400 1.400z"/></svg></i>
<span style="letter-spacing:0.558px;left:729.6px;top:315.5px;font-size:8.4px;color:#737779;font-weight:400;">Active</span>
<span style="letter-spacing:0.797px;left:926.7px;top:315.9px;font-size:9.2px;color:#585858;font-weight:700;">300.00/100.00%</span>
<div style="left:710.9px;top:339.0px;width:299.8px;height:26.6px;background:#e8ecf0;border:1px solid #cfd5dc;border-radius:2px"></div>
<i style="left:718.0px;top:347.0px;width:8px;height:8.4px"><svg viewBox="0 0 15 16" width="8" height="8.4" fill="#546387" style="display:block"><circle cx="7.500" cy="4.100" r="4.100"/><path d="M0 16v-2.200C0 11.100 2.100 9.200 4.700 9.200h5.600c2.600 0 4.700 1.900 4.700 4.600V16z"/></svg></i>
<span style="letter-spacing:0.232px;left:728.9px;top:344.4px;font-size:8.4px;color:#737779;font-weight:400;">Registered</span>
<span style="letter-spacing:0.856px;left:949.8px;top:344.8px;font-size:9.2px;color:#585858;font-weight:700;">0.00/0.00%</span>
<div style="left:710.9px;top:367.8px;width:299.8px;height:26.6px;background:#fefbde;border:1px solid #fefce6;border-radius:2px"></div>
<i style="left:718.0px;top:375.7px;width:11px;height:8.6px"><svg viewBox="0 0 21 16" width="11" height="8.6" fill="#546387" style="display:block"><circle cx="7.100" cy="4.100" r="4.100"/><path d="M0 16v-2.200C0 11.100 2 9.300 4.500 9.300h5.200c2.500 0 4.500 1.800 4.500 4.500V16z"/><path fill="none" stroke="#546387" stroke-width="2.200" d="M15.400 5.900l4 4m0-4l-4 4"/></svg></i>
<span style="letter-spacing:0.160px;left:731.8px;top:373.2px;font-size:8.4px;color:#737779;font-weight:400;">Disable</span>
<span style="letter-spacing:0.856px;left:949.8px;top:373.6px;font-size:9.2px;color:#585858;font-weight:700;">0.00/0.00%</span>
<div style="left:710.9px;top:396.7px;width:299.8px;height:26.6px;background:#fde1e1;border:1px solid #f8cfd0;border-radius:2px"></div>
<i style="left:718.0px;top:404.6px;width:11px;height:8.6px"><svg viewBox="0 0 21 16" width="11" height="8.6" fill="#546387" style="display:block"><circle cx="7.100" cy="4.100" r="4.100"/><path d="M0 16v-2.200C0 11.100 2 9.300 4.500 9.300h5.200c.8 0 1.600.2 2.200.6-1.500 1.500-1.900 4-.4 6.100z"/><path fill-rule="evenodd" d="M16.300 7.600a4.300 4.300 0 1 0 0 8.600 4.300 4.300 0 0 0 0-8.600zm0 2.700a1.600 1.600 0 1 1 0 3.200 1.600 1.600 0 0 1 0-3.200z"/></svg></i>
<span style="letter-spacing:0.299px;left:731.8px;top:402.1px;font-size:8.4px;color:#737779;font-weight:400;">Expired</span>
<span style="letter-spacing:0.856px;left:949.8px;top:402.5px;font-size:9.2px;color:#585858;font-weight:700;">0.00/0.00%</span>
<div style="left:710.9px;top:425.6px;width:299.8px;height:26.6px;background:#e8ecf0;border:1px solid #cfd5dc;border-radius:2px"></div>
<i style="left:718.0px;top:434.0px;width:9.5px;height:7.6px"><svg viewBox="0 0 20 16" width="9.5" height="7.6" fill="#6f7785" style="display:block"><path d="M0 15v-4C0 5.500 4.500 1.500 10 1.500S20 5.500 20 11v4h-3.600v-4h-1.200v4H11v-4H9v4H4.800v-4H3.600v4z"/></svg></i>
<span style="letter-spacing:-0.229px;left:729.9px;top:431.0px;font-size:8.4px;color:#737779;font-weight:400;">PPPoE</span>
<span style="letter-spacing:0.797px;left:926.7px;top:431.4px;font-size:9.2px;color:#585858;font-weight:700;">300.00/100.00%</span>
<div style="left:710.9px;top:454.5px;width:299.8px;height:26.6px;background:#e8ecf0;border:1px solid #cfd5dc;border-radius:2px"></div>
<i style="left:718.0px;top:462.5px;width:10.8px;height:8.4px"><svg viewBox="0 0 20 16" width="10.8" height="8.4" fill="#6f7785" style="display:block"><path fill="none" stroke="#6f7785" stroke-width="2.2" stroke-linecap="round" d="M1.200 6.200C6 1.600 14 1.600 18.800 6.200"/><path fill="none" stroke="#6f7785" stroke-width="2.2" stroke-linecap="round" d="M4.600 9.700c3-2.900 7.800-2.900 10.800 0"/><circle cx="10" cy="13.200" r="1.900"/></svg></i>
<span style="letter-spacing:0.571px;left:731.9px;top:459.9px;font-size:8.4px;color:#737779;font-weight:400;">Hotspot</span>
<span style="letter-spacing:0.856px;left:949.8px;top:460.3px;font-size:9.2px;color:#585858;font-weight:700;">0.00/0.00%</span>
<div style="left:710.9px;top:483.4px;width:299.8px;height:26.6px;background:#fdf3dc;border:1px solid #fcefcb;border-radius:2px"></div>
<i style="left:718.0px;top:491.3px;width:11px;height:8.6px"><svg viewBox="0 0 21 16" width="11" height="8.6" fill="#546387" style="display:block"><circle cx="7.100" cy="4.100" r="4.100"/><path d="M0 16v-2.200C0 11.100 2 9.300 4.500 9.300h5.200c.8 0 1.600.2 2.200.6-1.500 1.500-1.900 4-.4 6.100z"/><path fill-rule="evenodd" d="M16.300 7.600a4.300 4.300 0 1 0 0 8.600 4.300 4.300 0 0 0 0-8.600zm0 2.700a1.600 1.600 0 1 1 0 3.200 1.600 1.600 0 0 1 0-3.200z"/></svg></i>
<span style="letter-spacing:0.070px;left:731.9px;top:488.8px;font-size:8.4px;color:#737779;font-weight:400;">Expiring (1 Day)</span>
<span style="letter-spacing:0.856px;left:949.8px;top:489.2px;font-size:9.2px;color:#585858;font-weight:700;">0.00/0.00%</span>
<div style="left:710.9px;top:512.2px;width:299.8px;height:26.6px;background:#fdf3dc;border:1px solid #fcefcb;border-radius:2px"></div>
<i style="left:718.0px;top:520.1px;width:11px;height:8.6px"><svg viewBox="0 0 21 16" width="11" height="8.6" fill="#546387" style="display:block"><circle cx="7.100" cy="4.100" r="4.100"/><path d="M0 16v-2.200C0 11.100 2 9.300 4.500 9.300h5.200c.8 0 1.600.2 2.200.6-1.500 1.500-1.900 4-.4 6.100z"/><path fill-rule="evenodd" d="M16.300 7.600a4.300 4.300 0 1 0 0 8.600 4.300 4.300 0 0 0 0-8.600zm0 2.700a1.600 1.600 0 1 1 0 3.200 1.600 1.600 0 0 1 0-3.200z"/></svg></i>
<span style="letter-spacing:0.135px;left:731.9px;top:517.6px;font-size:8.4px;color:#737779;font-weight:400;">Expiring (3 Days)</span>
<span style="letter-spacing:0.856px;left:949.8px;top:518.0px;font-size:9.2px;color:#585858;font-weight:700;">0.00/0.00%</span>
<div style="left:710.9px;top:541.1px;width:299.8px;height:26.6px;background:#fdf3dc;border:1px solid #fcefcb;border-radius:2px"></div>
<i style="left:718.0px;top:549.0px;width:11px;height:8.6px"><svg viewBox="0 0 21 16" width="11" height="8.6" fill="#546387" style="display:block"><circle cx="7.100" cy="4.100" r="4.100"/><path d="M0 16v-2.200C0 11.100 2 9.300 4.500 9.300h5.200c.8 0 1.600.2 2.200.6-1.500 1.500-1.900 4-.4 6.100z"/><path fill-rule="evenodd" d="M16.300 7.600a4.300 4.300 0 1 0 0 8.600 4.300 4.300 0 0 0 0-8.600zm0 2.700a1.600 1.600 0 1 1 0 3.200 1.600 1.600 0 0 1 0-3.200z"/></svg></i>
<span style="letter-spacing:-0.082px;left:731.9px;top:546.5px;font-size:8.4px;color:#737779;font-weight:400;">Expiring (1 Week)</span>
<span style="letter-spacing:0.856px;left:949.8px;top:546.9px;font-size:9.2px;color:#585858;font-weight:700;">0.00/0.00%</span>
<div style="left:710.9px;top:570.0px;width:299.8px;height:26.6px;background:#fdf3dc;border:1px solid #fcefcb;border-radius:2px"></div>
<i style="left:718.0px;top:577.9px;width:11px;height:8.6px"><svg viewBox="0 0 21 16" width="11" height="8.6" fill="#546387" style="display:block"><circle cx="7.100" cy="4.100" r="4.100"/><path d="M0 16v-2.200C0 11.100 2 9.300 4.500 9.300h5.200c.8 0 1.600.2 2.200.6-1.500 1.500-1.900 4-.4 6.100z"/><path fill-rule="evenodd" d="M16.300 7.600a4.300 4.300 0 1 0 0 8.600 4.300 4.300 0 0 0 0-8.600zm0 2.700a1.600 1.600 0 1 1 0 3.200 1.600 1.600 0 0 1 0-3.200z"/></svg></i>
<span style="letter-spacing:0.006px;left:731.9px;top:575.4px;font-size:8.4px;color:#737779;font-weight:400;">Expiring (2 Weeks)</span>
<span style="letter-spacing:0.856px;left:949.8px;top:575.8px;font-size:9.2px;color:#585858;font-weight:700;">0.00/0.00%</span>
</div></div>
</div>
</body></html>
